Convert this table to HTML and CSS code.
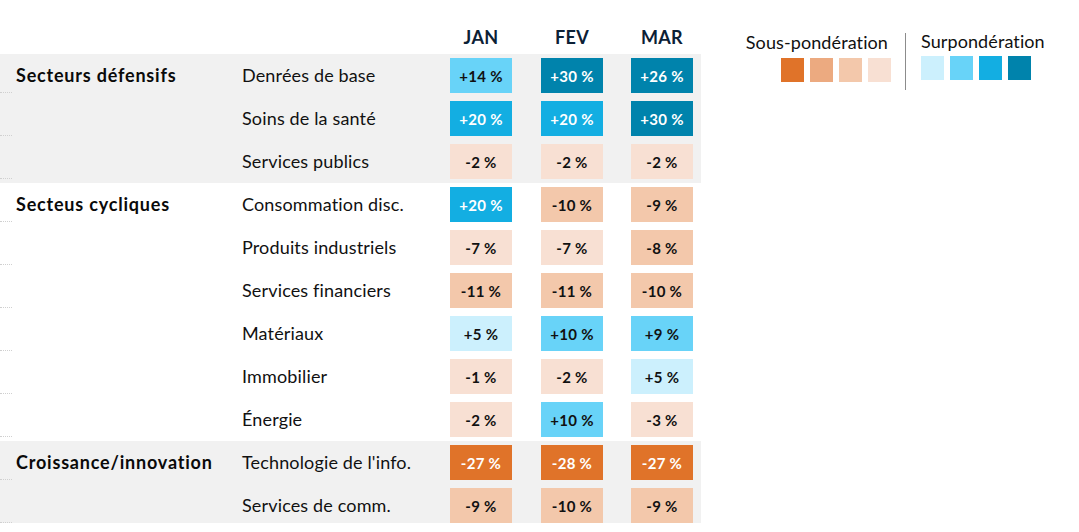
FILE: index.html
```html
<!DOCTYPE html>
<html lang="fr">
<head>
<meta charset="utf-8">
<link rel="stylesheet" href="styles.css">
</head>
<body>
<div class="page">
  <div class="chart">
    <div class="row head">
      <span></span><span></span><span></span>
      <span class="month">JAN</span>
      <span class="month">FEV</span>
      <span class="month">MAR</span>
    </div>

    <div class="group band">
      <div class="row">
        <span class="tick"></span><span class="sector">Secteurs défensifs</span><span class="name">Denrées de base</span>
        <span class="cell b2">+14 %</span><span class="cell b4">+30 %</span><span class="cell b4">+26 %</span>
      </div>
      <div class="row">
        <span class="tick"></span><span class="sector"></span><span class="name">Soins de la santé</span>
        <span class="cell b3">+20 %</span><span class="cell b3">+20 %</span><span class="cell b4">+30 %</span>
      </div>
      <div class="row">
        <span class="tick"></span><span class="sector"></span><span class="name">Services publics</span>
        <span class="cell o1">-2 %</span><span class="cell o1">-2 %</span><span class="cell o1">-2 %</span>
      </div>
    </div>

    <div class="group">
      <div class="row">
        <span class="tick"></span><span class="sector">Secteus cycliques</span><span class="name">Consommation disc.</span>
        <span class="cell b3">+20 %</span><span class="cell o2">-10 %</span><span class="cell o2">-9 %</span>
      </div>
      <div class="row">
        <span class="tick"></span><span class="sector"></span><span class="name">Produits industriels</span>
        <span class="cell o1">-7 %</span><span class="cell o1">-7 %</span><span class="cell o2">-8 %</span>
      </div>
      <div class="row">
        <span class="tick"></span><span class="sector"></span><span class="name">Services financiers</span>
        <span class="cell o2">-11 %</span><span class="cell o2">-11 %</span><span class="cell o2">-10 %</span>
      </div>
      <div class="row">
        <span class="tick"></span><span class="sector"></span><span class="name">Matériaux</span>
        <span class="cell b1">+5 %</span><span class="cell b2">+10 %</span><span class="cell b2">+9 %</span>
      </div>
      <div class="row">
        <span class="tick"></span><span class="sector"></span><span class="name">Immobilier</span>
        <span class="cell o1">-1 %</span><span class="cell o1">-2 %</span><span class="cell b1">+5 %</span>
      </div>
      <div class="row">
        <span class="tick"></span><span class="sector"></span><span class="name">Énergie</span>
        <span class="cell o1">-2 %</span><span class="cell b2">+10 %</span><span class="cell o1">-3 %</span>
      </div>
    </div>

    <div class="group band">
      <div class="row">
        <span class="tick"></span><span class="sector">Croissance/innovation</span><span class="name">Technologie de l'info.</span>
        <span class="cell o4">-27 %</span><span class="cell o4">-28 %</span><span class="cell o4">-27 %</span>
      </div>
      <div class="row last">
        <span class="tick"></span><span class="sector"></span><span class="name">Services de comm.</span>
        <span class="cell o2">-9 %</span><span class="cell o2">-10 %</span><span class="cell o2">-9 %</span>
      </div>
    </div>
  </div>

  <div class="legend">
    <div class="lg under">
      <div class="lg-title">Sous-pondération</div>
      <div class="swatches">
        <span class="sw o4"></span><span class="sw o3"></span><span class="sw o2"></span><span class="sw o1"></span>
      </div>
    </div>
    <div class="lg-sep"></div>
    <div class="lg over">
      <div class="lg-title">Surpondération</div>
      <div class="swatches">
        <span class="sw b1"></span><span class="sw b2"></span><span class="sw b3"></span><span class="sw b4"></span>
      </div>
    </div>
  </div>
</div>
</body>
</html>
```

FILE: styles.css
```css
* { box-sizing: border-box; }
html, body { margin: 0; padding: 0; background: #fff; }
body {
  font-family: "Lato", "Open Sans", "Liberation Sans", sans-serif;
  color: #111;
  width: 1079px;
  height: 532px;
  overflow: hidden;
}
.page {
  display: flex;
  align-items: flex-start;
}
.chart {
  width: 701px;
  flex: none;
}
.row {
  display: grid;
  grid-template-columns: 16px 226px 208px 62px 29px 62px 28px 62px;
  height: 43px;
  align-items: center;
}
.row > :nth-child(5) { grid-column: 6; }
.row > :nth-child(6) { grid-column: 8; }
.head {
  height: 54px;
  align-items: end;
  padding-bottom: 6px;
}
.month {
  text-align: center;
  font-weight: 700;
  font-size: 18px;
  color: #0b2035;
  line-height: 22px;
  letter-spacing: 0.3px;
}
.band { background: #f1f1f1; }
.tick {
  align-self: start;
  margin-top: 38px;
  width: 12px;
  height: 1px;
  border-bottom: 1px dotted #d0d0d0;
}
.sector {
  font-weight: 700;
  font-size: 18px;
  line-height: 22px;
  color: #0a0a0a;
  align-self: start;
  padding-top: 10px;
  letter-spacing: 0.8px;
}
.name {
  font-size: 18px;
  line-height: 22px;
  color: #111;
  align-self: start;
  padding-top: 10px;
  letter-spacing: 0.15px;
}
.cell {
  height: 35px;
  display: flex;
  align-items: center;
  justify-content: center;
  font-weight: 700;
  font-size: 15px;
  color: #111;
  letter-spacing: 0.3px;
}
.last { height: 39px; }
.last .cell { align-self: end; }

.b1 { background: #ccf0fd; }
.b2 { background: #68d3f8; }
.b3 { background: #13aee2; color: #fff; }
.b4 { background: #0083ac; color: #fff; }
.o1 { background: #f8e0d3; }
.o2 { background: #f3c8ab; }
.o3 { background: #ecaa80; }
.o4 { background: #e07329; color: #fff; }

.legend {
  display: flex;
  margin-top: 32px;
}
.lg {
  display: flex;
  flex-direction: column;
}
.under {
  width: 190px;
  align-items: flex-end;
  padding-top: 0;
}
.over { align-items: flex-start; }
.lg-title {
  font-size: 18px;
  color: #111;
  line-height: 20px;
  margin-bottom: 5px;
  letter-spacing: 0.1px;
}
.over .lg-title { margin-bottom: 4px; }
.under .lg-title { margin-top: 0; margin-right: 3px; margin-bottom: 6px; }
.over .lg-title { margin-top: -1px; }
.swatches {
  display: flex;
  gap: 6px;
}
.sw {
  width: 23px;
  height: 24px;
  display: block;
}
.over .swatches { margin-top: 1px; }
.lg-sep {
  width: 1px;
  height: 57px;
  background: #8c8c8c;
  margin: 1px 15px 0 14px;
}
```
